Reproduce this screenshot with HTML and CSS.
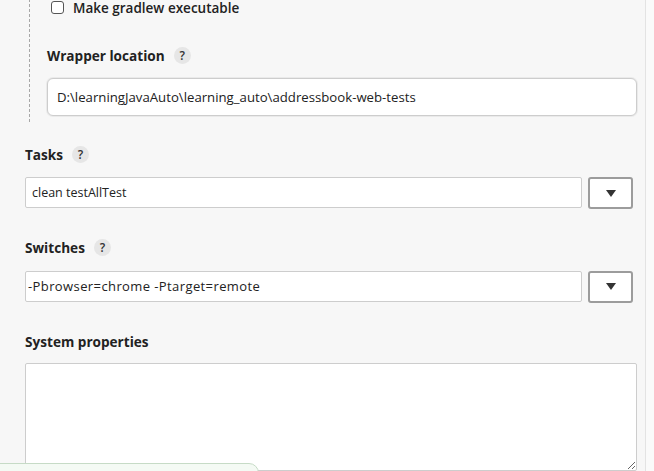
FILE: index.html
```html
<!DOCTYPE html>
<html>
<head>
<meta charset="utf-8">
<link rel="stylesheet" href="styles.css">
</head>
<body class="page">
  <div class="layout">
    <main class="form">
      <section class="nested">
        <label class="check-row">
          <input type="checkbox" class="check">
          <span class="check-text">Make gradlew executable</span>
        </label>
        <div class="label-row first-label">
          <span class="label">Wrapper location</span>
          <span class="help">?</span>
        </div>
        <input class="text-input wrapper-input" type="text" value="D:\learningJavaAuto\learning_auto\addressbook-web-tests">
      </section>

      <div class="label-row">
        <span class="label">Tasks</span>
        <span class="help">?</span>
      </div>
      <div class="combo">
        <input class="text-input combo-input" type="text" value="clean testAllTest">
        <button class="drop-btn" type="button"><span class="tri"></span></button>
      </div>

      <div class="label-row">
        <span class="label">Switches</span>
        <span class="help">?</span>
      </div>
      <div class="combo">
        <input class="text-input combo-input spaced" type="text" value="-Pbrowser=chrome -Ptarget=remote">
        <button class="drop-btn" type="button"><span class="tri"></span></button>
      </div>

      <div class="label-row">
        <span class="label">System properties</span>
      </div>
      <textarea class="area"></textarea>
    </main>
    <aside class="rail"></aside>
  </div>
  <div class="toast"></div>
</body>
</html>
```
FILE: styles.css
```css
html, body {
  margin: 0;
  padding: 0;
}
.page {
  background: #f7f7f7;
  font-family: "Open Sans", "Liberation Sans", sans-serif;
  color: #333;
  overflow: hidden;
  height: 471px;
}
.layout {
  display: flex;
  height: 471px;
}
.form {
  width: 612px;
  padding-left: 25px;
  padding-right: 8px;
  display: flex;
  flex-direction: column;
}
.rail {
  flex: 1;
  border-left: 1px solid #e3e3e3;
  background: #fafafa;
}
.nested {
  margin-left: 4px;
  border-left: 1px dashed #a8a8a8;
  padding-left: 17px;
  margin-top: -1px;
  padding-bottom: 6px;
  display: flex;
  flex-direction: column;
}
.check-row {
  display: flex;
  align-items: center;
  height: 17px;
  gap: 9px;
}
.check {
  appearance: none;
  -webkit-appearance: none;
  width: 13px;
  height: 13px;
  margin: 0 0 0 4px;
  border: 1px solid #555;
  border-radius: 3px;
  background: #fff;
}
.check-text {
  font-size: 13.5px;
  font-weight: 600;
  color: #222;
}
.label-row {
  display: flex;
  align-items: center;
  height: 20px;
  margin-top: 29px;
  gap: 9px;
}
.nested .first-label {
  margin-top: 29px;
}
.form > .label-row:first-of-type {
  margin-top: 23px;
}
.label {
  font-size: 13.6px;
  font-weight: 700;
  color: #222;
}
.help {
  width: 17px;
  height: 17px;
  border-radius: 50%;
  background: #e6e6e6;
  color: #333;
  font-size: 12px;
  font-weight: 600;
  display: flex;
  align-items: center;
  justify-content: center;
}
.text-input {
  box-sizing: border-box;
  font-family: "Open Sans", "Liberation Sans", sans-serif;
  font-size: 12.5px;
  color: #222;
  background: #fff;
  border: 1px solid #cdcdcd;
  outline: none;
  margin: 0;
}
.wrapper-input {
  margin-top: 13px;
  height: 38px;
  border-radius: 6px;
  padding: 0 9px;
  font-size: 13.2px;
  box-shadow: 0 0 0 1px #eaeaea;
}
.combo {
  display: flex;
  gap: 6px;
  margin-top: 13px;
  padding-right: 4px;
}
.combo-input {
  flex: 1;
  height: 31px;
  border-radius: 2px;
  padding: 0 6px;
}
.spaced {
  padding-left: 2px;
  font-size: 13px;
  letter-spacing: 0.4px;
}
.drop-btn {
  width: 45px;
  height: 32px;
  box-sizing: border-box;
  border: 2px solid #9c9c9c;
  border-radius: 3px;
  background: #fff;
  display: flex;
  align-items: center;
  justify-content: center;
  padding: 0;
}
.tri {
  width: 0;
  height: 0;
  border-left: 5px solid transparent;
  border-right: 5px solid transparent;
  border-top: 7px solid #333;
}
.area {
  margin-top: 12px;
  height: 108px;
  box-sizing: border-box;
  border: 1px solid #cdcdcd;
  border-radius: 2px;
  background: #fff;
  resize: vertical;
  flex-shrink: 0;
}
.toast {
  position: fixed;
  left: -1px;
  top: 463px;
  width: 258px;
  height: 40px;
  border: 1px solid #c6dbc6;
  border-top-right-radius: 10px;
  background: #f4faf4;
}
```
